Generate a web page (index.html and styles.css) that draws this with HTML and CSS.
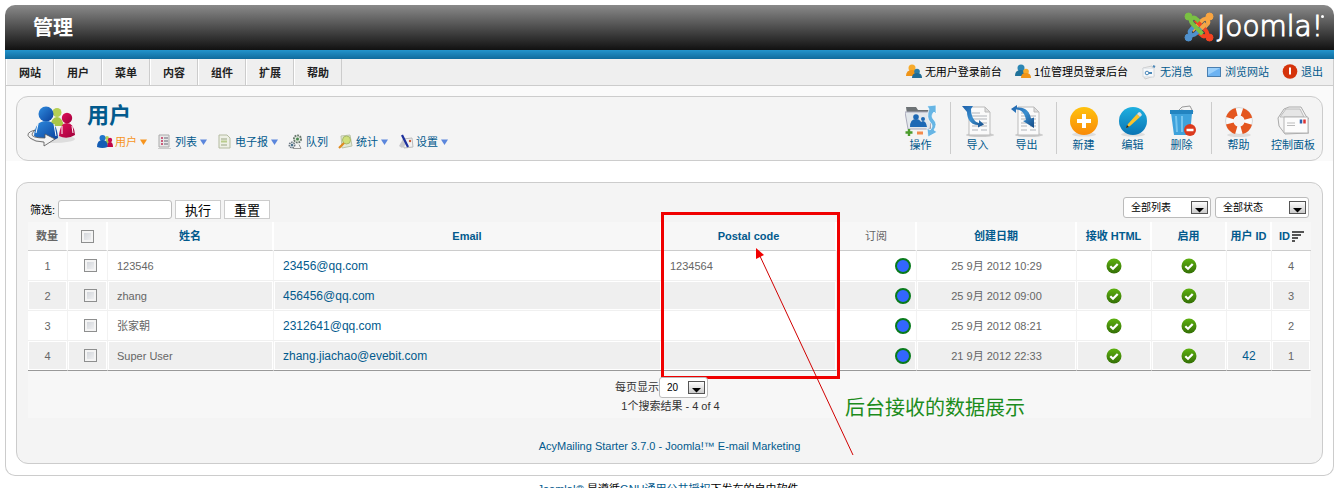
FILE: index.html
```html
<!DOCTYPE html>
<html lang="zh-CN">
<head>
<meta charset="utf-8">
<title>管理 - 用户</title>
<link rel="stylesheet" href="styles.css">
</head>
<body>
<svg class="defs" aria-hidden="true">
  <defs>
    <linearGradient id="gBlue" x1="0" y1="0" x2="1" y2="1"><stop offset="0" stop-color="#2f8de0"/><stop offset="1" stop-color="#0a3f9a"/></linearGradient>
    <linearGradient id="gRed" x1="0" y1="0" x2="1" y2="1"><stop offset="0" stop-color="#e0105a"/><stop offset="1" stop-color="#a0003a"/></linearGradient>
    <linearGradient id="gOrange" x1="0" y1="0" x2="0" y2="1"><stop offset="0" stop-color="#ffc20e"/><stop offset="1" stop-color="#f98a08"/></linearGradient>
    <linearGradient id="gSky" x1="0" y1="0" x2="0" y2="1"><stop offset="0" stop-color="#1fb0e0"/><stop offset="1" stop-color="#0a74b4"/></linearGradient>
    <linearGradient id="gGreen" x1="0" y1="0" x2="0" y2="1"><stop offset="0" stop-color="#5db010"/><stop offset="1" stop-color="#346f06"/></linearGradient>
    <linearGradient id="gGrey" x1="0" y1="0" x2="0" y2="1"><stop offset="0" stop-color="#ffffff"/><stop offset="1" stop-color="#c9c9c9"/></linearGradient>
    <linearGradient id="gArrow" x1="0" y1="0" x2="1" y2="1"><stop offset="0" stop-color="#1d5fa8"/><stop offset=".5" stop-color="#3a8fd0"/><stop offset="1" stop-color="#134a86"/></linearGradient>
    <symbol id="people" viewBox="0 0 48 42">
      <ellipse cx="26" cy="33" rx="22" ry="4" fill="#ddd"/>
      <circle cx="30" cy="6.500" r="4.500" fill="#b5cf55"/><path d="M23 20q2-9 7-9t7 9z" fill="#a9c648"/>
      <circle cx="40" cy="12" r="5.200" fill="url(#gRed)"/><path d="M32 30q1-13 8-13t8 12q-8 5-16 1z" fill="url(#gRed)"/>
      <circle cx="19" cy="8" r="7.500" fill="url(#gBlue)"/><path d="M7 30Q8 15 19 15t12 17q-10 7-24-2z" fill="url(#gBlue)"/>
      <path d="M11 18L9 27M27 18l2 12M35 20l0 8M45 20l1 7" stroke="#fff" stroke-width="1" fill="none"/>
      <path d="M8 24Q-3 27 3 32q5 4 14 4v4l11-7-10-5v4Q4 32 5 28q1-2 3-4z" fill="#f4f4f4" stroke="#555" stroke-width=".8"/>
    </symbol>
    <symbol id="trio" viewBox="0 0 16 16">
      <circle cx="10" cy="4" r="2" fill="#b5cf55"/><path d="M8 10q0-4 2-4t3 4z" fill="#a9c648"/>
      <circle cx="13" cy="6" r="2.200" fill="#c90a4c"/><path d="M10 13q0-5 3-5t3 5z" fill="#c00545"/>
      <circle cx="5.500" cy="4" r="3" fill="#1f74cc"/><path d="M0 13q0-7 5.500-7t5 7q-5 2-10.500 0z" fill="#135cb4"/>
    </symbol>
    <symbol id="duoOrange" viewBox="0 0 16 16">
      <circle cx="6" cy="4" r="3.500" fill="#f7ab2c"/><path d="M0 12q0-6 6-6t6 6z" fill="#ef9417"/>
      <circle cx="11" cy="7.500" r="2.800" fill="#2c7da8"/><path d="M6 14q0-5 5-5t5 5z" fill="#1f6c97"/>
    </symbol>
    <symbol id="duoBlue" viewBox="0 0 16 16">
      <circle cx="6" cy="4" r="3.500" fill="#2c86b4"/><path d="M0 12q0-6 6-6t6 6z" fill="#1f7199"/>
      <circle cx="11" cy="7.500" r="2.800" fill="#f7ab2c"/><path d="M6 14q0-5 5-5t5 5z" fill="#ef9417"/>
    </symbol>
    <symbol id="page" viewBox="0 0 32 32">
      <ellipse cx="18" cy="30" rx="14" ry="2" fill="#ccc"/>
      <path d="M7 2h16l5 5v23H7z" fill="#fafafa" stroke="#bbb"/><path d="M23 2v5h5z" fill="#ddd" stroke="#bbb"/>
      <path d="M10 8h8M10 11h15M10 14h15M10 18h6M19 18h6M10 21h6M19 21h6M10 25h6M19 25h6" stroke="#c9ccd0" stroke-width="1.600"/>
    </symbol>
    <symbol id="check" viewBox="0 0 16 16"><circle cx="8" cy="8" r="7.500" fill="url(#gGreen)"/><path d="M4.300 8.200l2.700 2.600 4.700-4.900" fill="none" stroke="#fff" stroke-width="2.200"/></symbol>
    <symbol id="pick" viewBox="0 0 17 13"><rect x=".5" y=".5" width="16" height="12" fill="url(#gGrey)" stroke="#555"/><path d="M4 7h9l-4.500 4.500z" fill="#000"/></symbol>
    <symbol id="down" viewBox="0 0 7 6"><path d="M0 .5h7L3.500 6z" fill="currentColor"/></symbol>
    <path id="arm" d="M18.500 22L8.500 12Q5.500 8.500 8 6.500T13 7.500l2 2" fill="none" stroke-width="4"/>
  </defs>
</svg>

<header class="top">
  <h1 class="top-title">管理</h1>
  <a class="logo" href="#" aria-label="Joomla!">
    <svg class="logo-mark" viewBox="0 0 30 30">
      <g stroke="#f9a541" fill="#f9a541"><use href="#arm" transform="rotate(90 15 15)"/><circle cx="25.500" cy="4.500" r="3.500"/></g>
      <g stroke="#f44321" fill="#f44321"><use href="#arm" transform="rotate(180 15 15)"/><circle cx="25.500" cy="25.500" r="3.500"/></g>
      <g stroke="#5091cd" fill="#5091cd"><use href="#arm" transform="rotate(270 15 15)"/><circle cx="4.500" cy="25.500" r="3.500"/></g>
      <g stroke="#7ac143" fill="#7ac143"><use href="#arm"/><circle cx="4.500" cy="4.500" r="3.500"/></g>
      <path d="M22 11.500l-5 5" stroke="#f9a541" stroke-width="4"/>
    </svg>
    <span class="logo-text">Joomla!</span><span class="logo-dot"></span>
  </a>
</header>

<main class="frame">
  <div class="bar">
    <nav class="menu">
      <a href="#">网站</a><a href="#">用户</a><a href="#">菜单</a><a href="#">内容</a><a href="#">组件</a><a href="#">扩展</a><a href="#">帮助</a>
    </nav>
    <div class="status">
      <span class="stat"><svg class="i16"><use href="#duoOrange"/></svg>无用户登录前台</span>
      <span class="stat"><svg class="i16"><use href="#duoBlue"/></svg>1位管理员登录后台</span>
      <a class="stat" href="#"><svg class="i16" viewBox="0 0 16 16"><path d="M2 4l9-2 2 10-9 3z" fill="#fff" stroke="#ccc"/><path d="M2 4h11v9H2z" fill="#f6f8fa" stroke="#d4d8dc"/><circle cx="6" cy="9" r="1.800" fill="none" stroke="#4c88b8"/><path d="M8 9h3" stroke="#4c88b8" stroke-width="2"/><path d="M12 2l2 1" stroke="#4c88b8" stroke-width="2"/></svg>无消息</a>
      <a class="stat" href="#"><svg class="i16" viewBox="0 0 16 16"><rect x="1.500" y="3.500" width="13" height="9" fill="#6db3f2" stroke="#4a7fb0"/><path d="M2 4h12L2 11z" fill="#9bd0fb"/></svg>浏览网站</a>
      <a class="stat" href="#"><svg class="i16" viewBox="0 0 16 16"><circle cx="8" cy="7.500" r="7.300" fill="#d5330b"/><path d="M8 3.500v7" stroke="#fff" stroke-width="2"/></svg>退出</a>
    </div>
  </div>

  <div class="head-wrap">
    <section class="panel head">
      <svg class="head-icon"><use href="#people"/></svg>
      <div class="head-text">
        <h2>用户</h2>
        <nav class="sub">
          <a class="on" href="#"><svg class="i16"><use href="#trio"/></svg><span>用户</span><svg class="caret"><use href="#down"/></svg></a>
          <a href="#"><svg class="i16" viewBox="0 0 16 16"><path d="M2 1h10v12H2z" fill="#e8e8e8" stroke="#aaa"/><path d="M4 4h2M4 7h2M4 10h2" stroke="#c0305a" stroke-width="1.500"/><path d="M7 4h4M7 7h4M7 10h4" stroke="#667" /><path d="M1 14.500h13" stroke="#ccc"/></svg><span>列表</span><svg class="caret"><use href="#down"/></svg></a>
          <a href="#"><svg class="i16" viewBox="0 0 16 16"><path d="M2 1h8l3 3v10H2z" fill="#eef0e6" stroke="#b4bba0"/><path d="M4 5h6M4 11h6" stroke="#9aa684"/><path d="M4 7.500h6" stroke="#b9cc8c" stroke-width="2"/></svg><span>电子报</span><svg class="caret"><use href="#down"/></svg></a>
          <a href="#"><svg class="i16" viewBox="0 0 16 16"><circle cx="9.500" cy="5" r="3.600" fill="#dfe5dc" stroke="#66756a" stroke-width="1.800" stroke-dasharray="1.800 .9"/><circle cx="9.500" cy="5" r="1.500" fill="#4b8a50"/><circle cx="4" cy="11" r="2.700" fill="#e4e8ea" stroke="#6a7680" stroke-width="1.600" stroke-dasharray="1.500 .8"/><circle cx="4" cy="11" r="1.200" fill="#47708c"/><path d="M5 14.500h8l-2-4" stroke="#999" fill="none"/></svg><span>队列</span></a>
          <a href="#"><svg class="i16" viewBox="0 0 16 16"><path d="M3 2l9-1 2 11-10 2z" fill="#e3e8d8" stroke="#bcc4a8"/><circle cx="8.500" cy="6" r="4" fill="#cfe07c" stroke="#a8b86a"/><path d="M1 14l5-5" stroke="#e08a1c" stroke-width="2.200"/></svg><span>统计</span><svg class="caret"><use href="#down"/></svg></a>
          <a href="#"><svg class="i16" viewBox="0 0 16 16"><path d="M5 5l9-1 1 9-9 1z" fill="#f2f2f2" stroke="#bbb"/><path d="M1 12l4-7 4 4-5 5z" fill="#c8c8cc"/><path d="M4 1l6 12" stroke="#1c2f9c" stroke-width="2.200"/><circle cx="12" cy="7" r="1.200" fill="#c53"/></svg><span>设置</span><svg class="caret"><use href="#down"/></svg></a>
        </nav>
      </div>
      <div class="tools">
        <button type="button"><svg class="i32" viewBox="0 0 32 32"><path d="M1 2h10l2 3h13v19H4z" fill="#6d7275"/><path d="M0 7h27l-2 17H3z" fill="#e3e8ec" stroke="#aab"/><circle cx="11" cy="12" r="2.800" fill="#1d69b5"/><path d="M5 22q0-8 6-8t6 8z" fill="#1d69b5"/><circle cx="18" cy="14" r="2" fill="#1d69b5"/><path d="M15 22q0-6 3-6t4 6z" fill="#1d69b5"/><path d="M22 1l9-1v9l-2-2q-4 4 0 8t0 10l3 2-9 5-1-9 3 2q4-4 0-8t-1-13z" fill="#67b5e4" stroke="#fff" stroke-width=".7"/><path d="M4 24v7M.5 27.500h7" stroke="#4b9c2c" stroke-width="2.400"/><path d="M12 28h6" stroke="#f58a4b" stroke-width="3"/></svg>操作</button>
        <span class="rule"></span>
        <button type="button"><svg class="i32" viewBox="0 0 32 32"><use href="#page"/><path d="M0 1h11l-2 3c0 7 3 13 8 14v-3l5 4.500-6 3v-2.500C9 20 5 14 5 7z" fill="url(#gArrow)"/></svg>导入</button>
        <button type="button"><svg class="i32" viewBox="0 0 32 32"><use href="#page"/><path d="M0 4l6-4v2.500c9-1 13 5 14 11l3-1v10.500l-11-7 3-1C14 9 11 4.500 5 4.500V8z" fill="url(#gArrow)"/></svg>导出</button>
        <span class="rule"></span>
        <button type="button"><svg class="i32" viewBox="0 0 32 32"><ellipse cx="16" cy="29.500" rx="12" ry="2" fill="#ddd"/><circle cx="16" cy="16" r="14" fill="url(#gOrange)"/><path d="M16 9v14M9 16h14" stroke="#fff" stroke-width="4"/></svg>新建</button>
        <button type="button"><svg class="i32" viewBox="0 0 32 32"><ellipse cx="16" cy="29.500" rx="12" ry="2" fill="#ddd"/><circle cx="16" cy="16" r="14" fill="url(#gSky)"/><path d="M9 23l2-4L20 9l3 3-10 9z" fill="#fcc32c"/><path d="M20 9l2-2q2 0 3 3l-2 2z" fill="#ddd"/><path d="M9 23l1-3 2 2z" fill="#222"/></svg>编辑</button>
        <button type="button"><svg class="i32" viewBox="0 0 32 32"><path d="M12 6l4-4 8-1 3 6z" fill="#f5f5f5" stroke="#999"/><path d="M15 5l6 1" stroke="#999"/><path d="M5 8h21l-2 22H8z" fill="#3ea2dc"/><path d="M10 11l1 16M16 11v16" stroke="#75c4ee" stroke-width="2"/><path d="M4 5h23v4H4z" fill="#2384c0"/><circle cx="24" cy="25" r="6" fill="#db3a1e"/><path d="M20.500 25h7" stroke="#fff" stroke-width="2.500"/></svg>删除</button>
        <span class="rule"></span>
        <button type="button"><svg class="i32" viewBox="0 0 32 32"><ellipse cx="16" cy="30" rx="12" ry="2" fill="#ddd"/><circle cx="16" cy="16" r="13.500" fill="#fafafa" stroke="#d8d8d8"/><circle cx="16" cy="16" r="9.500" fill="none" stroke="#e4561f" stroke-width="8" stroke-dasharray="9.500 5.420" stroke-dashoffset="-2.700"/><circle cx="16" cy="16" r="5.500" fill="#f4f4f4"/></svg>帮助</button>
        <button type="button"><svg class="i32" viewBox="0 0 32 32"><path d="M1 13L7 4l5-2h12l5 9 3 3v14l-24 1-6-8z" fill="#f4f4f4" stroke="#aaa"/><path d="M3 12L9 4h14l4 8z" fill="#e6e6e6" stroke="#bbb"/><path d="M7 12h24v16H7z" fill="#fcfcfc" stroke="#b4b4b4"/><path d="M10 18h8M10 20.500h8" stroke="#bbb"/><path d="M24 14.500v4" stroke="#2b62ad" stroke-width="2.500"/><path d="M27.500 14.500v4" stroke="#d33" stroke-width="2.500"/></svg>控制面板</button>
      </div>
    </section>
  </div>

  <section class="panel body">
    <div class="filters">
      <form class="search">
        <label for="q">筛选:</label><input id="q" type="text">
        <button type="button">执行</button><button type="button">重置</button>
      </form>
      <div class="picks">
        <span class="pick"><select class="w-list" aria-label="列表"><option>全部列表</option></select><svg><use href="#pick"/></svg></span>
        <span class="pick"><select class="w-state" aria-label="状态"><option>全部状态</option></select><svg><use href="#pick"/></svg></span>
      </div>
    </div>
    <table class="grid">
      <colgroup><col class="c-n"><col class="c-n"><col class="c-name"><col><col class="c-post"><col class="c-sub"><col class="c-date"><col class="c-flag"><col class="c-flag"><col class="c-uid"><col class="c-id"></colgroup>
      <thead>
        <tr>
          <th>数量</th><th><input type="checkbox" aria-label="全选"></th>
          <th><a href="#">姓名</a></th><th><a href="#">Email</a></th>
          <th class="marked"><a href="#">Postal code</a>
            <div class="mark-box"></div>
            <svg class="mark-arrow" viewBox="0 0 100 210"><path d="M97 207L3 6" stroke="#d00000" fill="none"/><path d="M0 0l8 7-8 4z" fill="#f00000"/></svg>
            <div class="mark-note">后台接收的数据展示</div>
          </th>
          <th class="plain">订阅</th><th><a href="#">创建日期</a></th><th><a href="#">接收 HTML</a></th><th><a href="#">启用</a></th><th><a href="#">用户 ID</a></th>
          <th><a class="sorted" href="#">ID<svg class="sort" viewBox="0 0 12 11"><path d="M0 1h12M0 4h9M0 7h6M0 10h3" stroke="#555" stroke-width="2"/></svg></a></th>
        </tr>
      </thead>
      <tbody>
        <tr><td class="mid">1</td><td class="tick"><input type="checkbox" aria-label="123546"></td><td>123546</td><td><a href="#">23456@qq.com</a></td><td class="post">1234564</td><td class="dot"><span></span></td><td class="mid">25 9月 2012 10:29</td><td class="mid"><svg class="ok"><use href="#check"/></svg></td><td class="mid"><svg class="ok"><use href="#check"/></svg></td><td class="mid"></td><td class="mid">4</td></tr>
        <tr><td class="mid">2</td><td class="tick"><input type="checkbox" aria-label="zhang"></td><td>zhang</td><td><a href="#">456456@qq.com</a></td><td class="post"></td><td class="dot"><span></span></td><td class="mid">25 9月 2012 09:00</td><td class="mid"><svg class="ok"><use href="#check"/></svg></td><td class="mid"><svg class="ok"><use href="#check"/></svg></td><td class="mid"></td><td class="mid">3</td></tr>
        <tr><td class="mid">3</td><td class="tick"><input type="checkbox" aria-label="张家朝"></td><td>张家朝</td><td><a href="#">2312641@qq.com</a></td><td class="post"></td><td class="dot"><span></span></td><td class="mid">25 9月 2012 08:21</td><td class="mid"><svg class="ok"><use href="#check"/></svg></td><td class="mid"><svg class="ok"><use href="#check"/></svg></td><td class="mid"></td><td class="mid">2</td></tr>
        <tr><td class="mid">4</td><td class="tick"><input type="checkbox" aria-label="Super User"></td><td>Super User</td><td><a href="#">zhang.jiachao@evebit.com</a></td><td class="post"></td><td class="dot"><span></span></td><td class="mid">21 9月 2012 22:33</td><td class="mid"><svg class="ok"><use href="#check"/></svg></td><td class="mid"><svg class="ok"><use href="#check"/></svg></td><td class="mid"><a href="#">42</a></td><td class="mid">1</td></tr>
      </tbody>
      <tfoot>
        <tr><td colspan="11">
          <div class="limit"><label for="lim">每页显示</label><span class="pick"><select id="lim" class="w-lim"><option>20</option></select><svg><use href="#pick"/></svg></span></div>
          <div class="count">1个搜索结果 - 4 of 4</div>
        </td></tr>
      </tfoot>
    </table>
    <p class="credit"><a href="#">AcyMailing Starter 3.7.0 - Joomla!™ E-mail Marketing</a></p>
  </section>
</main>
<footer class="legal"><a href="#">Joomla!®</a> 是遵循<a href="#">GNU通用公共授权</a>下发布的自由软件.</footer>
</body>
</html>
```
FILE: styles.css
```css
* { box-sizing: border-box; }
html { background: #fff; }
body {
  margin: 5px 8px 0 5px;
  height: calc(100vh - 5px);
  overflow: hidden;
  font: 11px/16px "Liberation Sans", "Noto Sans CJK SC", sans-serif;
  color: #000;
}
a { color: #025a8d; text-decoration: none; }
h1, h2, p { margin: 0; }
svg { display: block; flex: none; }
.defs { position: absolute; width: 0; height: 0; }
.i16 { width: 16px; height: 16px; }
.i32 { width: 32px; height: 32px; }

.top {
  display: flex;
  align-items: center;
  justify-content: space-between;
  height: 54px;
  padding: 0 10px 0 28px;
  background: linear-gradient(#2394cc, #0f6a9c) bottom / 100% 9px no-repeat, linear-gradient(#8a8a8a, #111 45px);
  border-radius: 10px 10px 0 0;
}
.top-title { padding-bottom: 8px; font-size: 20px; line-height: 28px; color: #fff; }
.logo { display: flex; align-items: center; gap: 3px; padding-bottom: 10px; color: #fff; }
.logo-mark { width: 30px; height: 30px; }
.logo-text { font: 200 28px/32px "DejaVu Sans", sans-serif; -webkit-text-stroke: 1px #fff; }
.logo-dot { align-self: flex-start; width: 3px; height: 3px; margin: 4px 0 0 -5px; border-radius: 50%; background: #fff; }

.frame {
  border: 1px solid #ccc;
  border-top: 0;
  border-radius: 0 0 10px 10px;
  padding-bottom: 11px;
}
.bar {
  display: flex;
  justify-content: space-between;
  height: 27px;
  border-bottom: 1px solid #ccc;
  background: #efefef;
}
.menu { display: flex; }
.menu a {
  padding: 6px 12px;
  border-left: 1px solid #fff;
  border-right: 1px solid #ccc;
  font-weight: bold;
  color: #222;
}
.status { display: flex; align-items: center; gap: 13px; padding-right: 10px; }
.stat { display: flex; align-items: center; gap: 3px; }

.head-wrap { padding: 10px 10px 0; background: #fafafa; }
.panel { border: 1px solid #ccc; border-radius: 12px; background: #f4f4f4; }
.head { display: flex; height: 65px; }
.head-icon { width: 48px; height: 42px; margin: 9px 12px 0 10px; }
.head-text { flex: 1; }
.head-text h2 { padding-top: 6px; font-size: 22px; line-height: 26px; color: #025a8d; }
.sub { display: flex; gap: 10px; padding: 5px 0 0 10px; }
.sub a { display: flex; align-items: center; gap: 2px; }
.sub .on { color: #f7941d; }
.caret { width: 7px; height: 6px; margin-left: 1px; color: #5b86dc; }
.on .caret { color: #f7941d; }
.tools { display: flex; align-items: flex-start; padding-top: 8px; }
.tools button {
  display: flex;
  flex-direction: column;
  align-items: center;
  min-width: 49px;
  padding: 0 8px;
  border: 0;
  background: none;
  font: inherit;
  color: #025a8d;
}
.tools button:last-child { padding: 0 7px 0 8px; }
.rule { width: 1px; height: 52px; margin: -3px 2px 0 5px; background: #ccc; }

.body { margin: 21px 10px 0; padding: 14px 11px 9px; }
.filters { display: flex; justify-content: space-between; height: 25px; padding: 0 2px 0 2px; }
.search { display: flex; align-items: center; gap: 3px; }
.search input { width: 114px; height: 19px; border: 1px solid #bbb; border-radius: 3px; background: #fff; }
.search button { width: 46px; height: 19px; padding: 0; border: 1px solid #ccc; background: #fff; font: 13px/16px "Noto Sans CJK SC", sans-serif; color: #000; }
.picks { display: flex; gap: 4px; }
.pick { position: relative; display: inline-block; }
.pick select {
  display: block;
  height: 21px;
  padding: 0 7px;
  border: 1px solid #bbb;
  border-radius: 3px;
  appearance: none;
  background: #fff;
  font: 10px/16px "Liberation Sans", "Noto Sans CJK SC", sans-serif;
  color: #000;
}
.pick svg { position: absolute; right: 3px; top: 4px; width: 17px; height: 13px; pointer-events: none; }
.pick .w-list { width: 88px; }
.pick .w-state { width: 94px; }
.pick .w-lim { width: 49px; }

.grid { width: 100%; table-layout: fixed; border-collapse: separate; border-spacing: 0; color: #666; }
.c-n { width: 40px; }
.c-name { width: 166px; }
.c-post { width: 175px; }
.c-sub { width: 80px; }
.c-date { width: 160px; }
.c-flag { width: 75px; }
.c-uid { width: 45px; }
.c-id { width: 39px; }
.grid th { height: 29px; padding: 0; border-bottom: 1px solid #ccc; border-right: 2px solid #fff; background: #f7f7f7; white-space: nowrap; }
.grid th:last-child { border-right: 0; }
.grid .plain { font-weight: normal; }
.grid tbody td { height: 30px; padding: 0 9px; border-right: 1px solid #f2f2f2; border-bottom: 1px solid #f0f0f0; background: #fff; box-shadow: inset 0 0 0 1px #fff; }
.grid tbody .post { padding: 0 8px; }
.grid tbody tr:nth-child(even) td { background: #efefef; }
.grid tbody tr:last-child td { border-bottom: 1px solid #999; }
.grid tbody a { font-size: 12px; }
.grid tbody .mid { padding: 0; text-align: center; }
.grid tbody .tick { padding: 0 0 0 16px; }
.grid input {
  display: block;
  width: 13px;
  height: 13px;
  margin: 0 auto;
  border: 1px solid #8e8f8f;
  appearance: none;
  background: linear-gradient(135deg, #cbcfd5, #f6f6f6);
  box-shadow: inset 0 0 0 2px #f4f4f4;
}
.grid .tick input { margin: 0; }
.grid tbody .dot { padding: 0 5px 0 0; }
.dot span { display: block; width: 16px; height: 16px; margin-left: auto; border: 2px solid #087a1c; border-radius: 50%; background: #36f; }
.ok { width: 16px; height: 16px; margin: 0 auto; }
.sorted { display: flex; align-items: center; justify-content: center; gap: 2px; }
.sort { width: 12px; height: 11px; }
.grid tfoot td { padding: 6px 0 4px; background: #f7f7f7; text-align: center; color: #333; }
.limit { display: flex; justify-content: center; padding-right: 16px; line-height: 20px; }
.count { padding-left: 2px; }

.marked { position: relative; }
.mark-box { position: absolute; left: -1px; top: -10px; width: 179px; height: 167px; border: 3px solid #f00000; }
.mark-arrow { position: absolute; left: 94px; top: 26px; width: 100px; height: 210px; }
.mark-note { position: absolute; left: 183px; top: 171px; font: 20px/28px "Noto Sans CJK SC", sans-serif; color: #1c8c1c; }

.credit { padding: 20px 0 0; text-align: center; }
.legal { padding-top: 5px; text-align: center; }
```
